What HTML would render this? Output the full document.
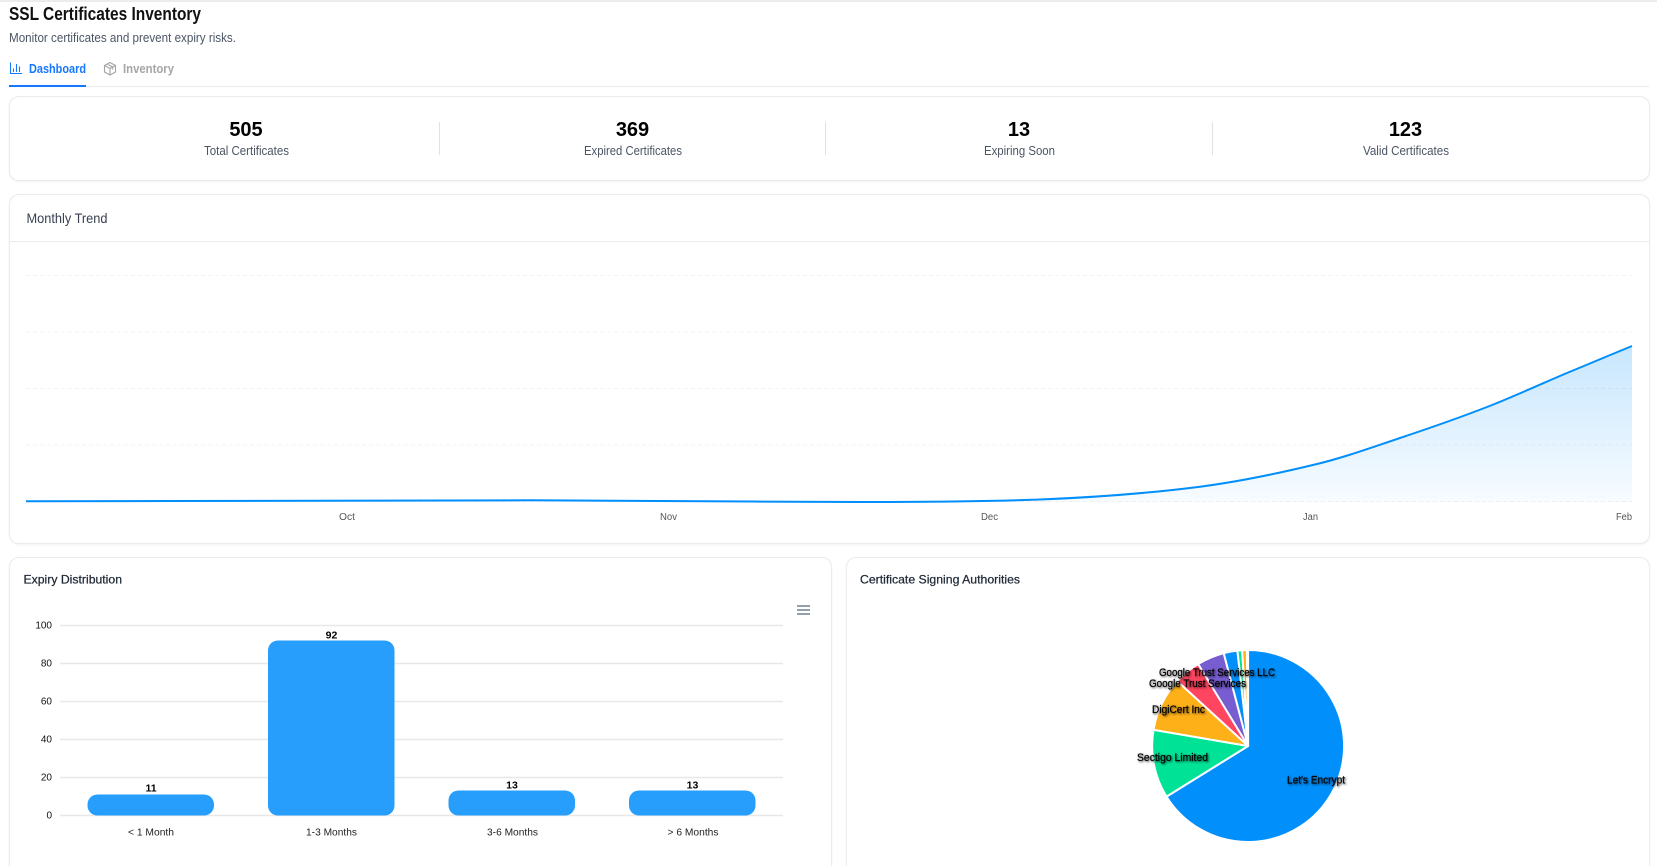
<!DOCTYPE html>
<html lang="en">
<head>
<meta charset="utf-8">
<title>SSL Certificates Inventory</title>
<style>
html,body{margin:0;padding:0;width:1657px;height:866px;overflow:hidden;background:#fff;font-family:"Liberation Sans",Arial,sans-serif}
#page{position:relative;width:1657px;height:866px;overflow:hidden;background:#fff}
.card{position:absolute;box-sizing:border-box;background:#fff;border:1px solid #ebebeb;border-radius:10px;box-shadow:0 1px 2px rgba(0,0,0,.05)}
svg{position:absolute;left:0;top:0}
text{font-family:"Liberation Sans",Arial,sans-serif}
.semi{stroke:currentColor;stroke-width:.25px}
</style>
</head>
<body>
<div id="page">
<div style="position:absolute;left:0;top:0;width:1657px;height:2px;background:#ececec"></div>
<div style="position:absolute;left:9px;top:86px;width:1640px;height:1px;background:#eaeaea"></div>
<div style="position:absolute;left:9px;top:85px;width:77px;height:2px;background:#1677ff"></div>
<div class="card" style="left:9px;top:96px;width:1641px;height:85px"></div>
<div class="card" style="left:9px;top:194px;width:1641px;height:350px"></div>
<div style="position:absolute;left:10px;top:241px;width:1639px;height:1px;background:#ececec"></div>
<div class="card" style="left:9px;top:557px;width:823px;height:340px"></div>
<div class="card" style="left:846px;top:557px;width:804px;height:340px"></div>

<svg width="1657" height="866" viewBox="0 0 1657 866" xmlns="http://www.w3.org/2000/svg">
<defs>
<linearGradient id="ag" gradientUnits="userSpaceOnUse" x1="0" y1="346" x2="0" y2="502">
<stop offset="0" stop-color="#008ffb" stop-opacity=".22"/>
<stop offset="1" stop-color="#008ffb" stop-opacity=".03"/>
</linearGradient>
<filter id="ds" x="-20%" y="-60%" width="140%" height="220%">
<feDropShadow dx="1" dy="1" stdDeviation="1" flood-color="#000" flood-opacity=".75"/>
</filter>
</defs>

<!-- header -->
<text x="9" y="20" font-size="18" font-weight="700" fill="#111" textLength="192" lengthAdjust="spacingAndGlyphs">SSL Certificates Inventory</text>
<text x="9" y="42" font-size="13" fill="#4b5563" textLength="227" lengthAdjust="spacingAndGlyphs">Monitor certificates and prevent expiry risks.</text>

<!-- tabs -->
<path d="M10.5 62.5v11H22M13.5 72V68.5M16.5 72V64M19.5 72V66.5" fill="none" stroke="#1677ff" stroke-width="1.1"/>
<text x="29" y="73" font-size="13" font-weight="700" fill="#1677ff" textLength="57" lengthAdjust="spacingAndGlyphs">Dashboard</text>
<path d="M110 62.5l5.5 3v6.5l-5.5 3-5.5-3v-6.5zM104.5 65.5l5.5 3 5.5-3M110 68.5V75M107.2 64l5.5 3v2.5" fill="none" stroke="#a3a3a3" stroke-width="1.1" stroke-linejoin="round"/>
<text x="123" y="73" font-size="13" font-weight="700" fill="#a6a6a6" textLength="51" lengthAdjust="spacingAndGlyphs">Inventory</text>

<!-- stats -->
<g fill="#000" font-size="20" font-weight="700" text-anchor="middle">
<text x="246" y="136">505</text>
<text x="632.5" y="136">369</text>
<text x="1019" y="136">13</text>
<text x="1405.5" y="136">123</text>
</g>
<g fill="#4b5563" font-size="13">
<text x="204" y="155" textLength="85" lengthAdjust="spacingAndGlyphs">Total Certificates</text>
<text x="584" y="155" textLength="98" lengthAdjust="spacingAndGlyphs">Expired Certificates</text>
<text x="984" y="155" textLength="71" lengthAdjust="spacingAndGlyphs">Expiring Soon</text>
<text x="1363" y="155" textLength="86" lengthAdjust="spacingAndGlyphs">Valid Certificates</text>
</g>
<g fill="#e2e2e2">
<rect x="439" y="122" width="1" height="33"/>
<rect x="825" y="122" width="1" height="33"/>
<rect x="1212" y="122" width="1" height="33"/>
</g>

<!-- monthly trend -->
<text x="26.5" y="223" font-size="14" fill="#374151" textLength="81" lengthAdjust="spacingAndGlyphs">Monthly Trend</text>
<g stroke="#f3f3f3" stroke-dasharray="4 3" stroke-width="1">
<path d="M26 275.5H1632M26 332H1632M26 388.5H1632M26 445H1632M26 501.5H1632"/>
</g>
<path d="M26 501.3C200 501 400 500.3 530 500.3C650 500.3 750 502 860 502C930 502 990 501.5 1040 499.5C1093.3 497.4 1146.7 493.5 1200 486.7C1239 481.7 1278 473.5 1317 464C1344.7 457.3 1372.3 447.3 1400 438C1429 428.3 1458 418.3 1487 407C1513.7 396.6 1540.3 384.2 1567 373C1588.7 363.9 1610.3 355 1632 346V502H26Z" fill="url(#ag)"/>
<path d="M26 501.3C200 501 400 500.3 530 500.3C650 500.3 750 502 860 502C930 502 990 501.5 1040 499.5C1093.3 497.4 1146.7 493.5 1200 486.7C1239 481.7 1278 473.5 1317 464C1344.7 457.3 1372.3 447.3 1400 438C1429 428.3 1458 418.3 1487 407C1513.7 396.6 1540.3 384.2 1567 373C1588.7 363.9 1610.3 355 1632 346" fill="none" stroke="#008ffb" stroke-width="2"/>
<g fill="#555" font-size="10">
<text x="339" y="520" textLength="16" lengthAdjust="spacingAndGlyphs">Oct</text>
<text x="660" y="520" textLength="17" lengthAdjust="spacingAndGlyphs">Nov</text>
<text x="981" y="520" textLength="17" lengthAdjust="spacingAndGlyphs">Dec</text>
<text x="1303" y="520" textLength="15" lengthAdjust="spacingAndGlyphs">Jan</text>
<text x="1616" y="520" textLength="16" lengthAdjust="spacingAndGlyphs">Feb</text>
</g>

<!-- expiry distribution -->
<text class="semi" x="23.5" y="583.5" font-size="12" fill="#1f2937" color="#1f2937" textLength="98.5" lengthAdjust="spacingAndGlyphs">Expiry Distribution</text>
<g stroke="#e8e8e8" stroke-width="1.5">
<path d="M60 625.5H783M60 663.5H783M60 701.5H783M60 739.5H783M60 777.5H783M60 815.5H783"/>
</g>
<g fill="#279efb">
<rect x="87.5" y="794.5" width="126.5" height="21" rx="10" ry="10"/>
<rect x="268" y="640.5" width="126.5" height="175" rx="10" ry="10"/>
<rect x="448.5" y="790.5" width="126.5" height="25" rx="10" ry="10"/>
<rect x="629" y="790.5" width="126.5" height="25" rx="10" ry="10"/>
</g>
<g fill="#111" font-size="10" text-anchor="end">
<text x="52" y="628.5">100</text>
<text x="52" y="666.5">80</text>
<text x="52" y="704.5">60</text>
<text x="52" y="742.5">40</text>
<text x="52" y="780.5">20</text>
<text x="52" y="818.5">0</text>
</g>
<g fill="#222" font-size="10.5">
<text x="128" y="835.5" textLength="46" lengthAdjust="spacingAndGlyphs">&lt; 1 Month</text>
<text x="306" y="835.5" textLength="51" lengthAdjust="spacingAndGlyphs">1-3 Months</text>
<text x="487" y="835.5" textLength="51" lengthAdjust="spacingAndGlyphs">3-6 Months</text>
<text x="667.5" y="835.5" textLength="51" lengthAdjust="spacingAndGlyphs">&gt; 6 Months</text>
</g>
<g fill="#000" font-size="10.5" font-weight="700" text-anchor="middle">
<text x="151" y="791.5">11</text>
<text x="331.5" y="638.5">92</text>
<text x="512" y="788.5">13</text>
<text x="692.5" y="788.5">13</text>
</g>
<path d="M797 606h13M797 610h13M797 614h13" stroke="#6e8192" stroke-width="1.4"/>

<!-- signing authorities -->
<text class="semi" x="860" y="583.5" font-size="12" fill="#1f2937" color="#1f2937" textLength="160" lengthAdjust="spacingAndGlyphs">Certificate Signing Authorities</text>
<g stroke="#fff" stroke-width="2" stroke-linejoin="round" transform="translate(1.4 0)">
<path fill="#008ffb" d="M1246.7 746V650A96 96 0 1 1 1165.1 796.6Z"/>
<path fill="#00e396" d="M1246.7 746L1165.1 796.6A96 96 0 0 1 1152.1 729.8Z"/>
<path fill="#feb019" d="M1246.7 746L1152.1 729.8A96 96 0 0 1 1175.9 681.1Z"/>
<path fill="#ff4560" d="M1246.7 746L1175.9 681.1A96 96 0 0 1 1196.8 664Z"/>
<path fill="#775dd0" d="M1246.7 746L1196.8 664A96 96 0 0 1 1222.3 653.1Z"/>
<path fill="#008ffb" d="M1246.7 746L1222.3 653.1A96 96 0 0 1 1236 650.6Z"/>
<path fill="#00e396" d="M1246.7 746L1236 650.6A96 96 0 0 1 1240.7 650.2Z"/>
<path fill="#feb019" d="M1246.7 746L1240.7 650.2A96 96 0 0 1 1245.4 650Z"/>
</g>
<g fill="#000" stroke="#000" stroke-width=".2" font-size="11" filter="url(#ds)">
<text x="1287" y="783.5" textLength="58" lengthAdjust="spacingAndGlyphs">Let's Encrypt</text>
<text x="1137" y="761" textLength="71" lengthAdjust="spacingAndGlyphs">Sectigo Limited</text>
<text x="1152" y="713" textLength="53" lengthAdjust="spacingAndGlyphs">DigiCert Inc</text>
<text x="1149" y="687" textLength="97" lengthAdjust="spacingAndGlyphs">Google Trust Services</text>
<text x="1159" y="676" textLength="116" lengthAdjust="spacingAndGlyphs">Google Trust Services LLC</text>
</g>
</svg>
</div>
</body>
</html>
